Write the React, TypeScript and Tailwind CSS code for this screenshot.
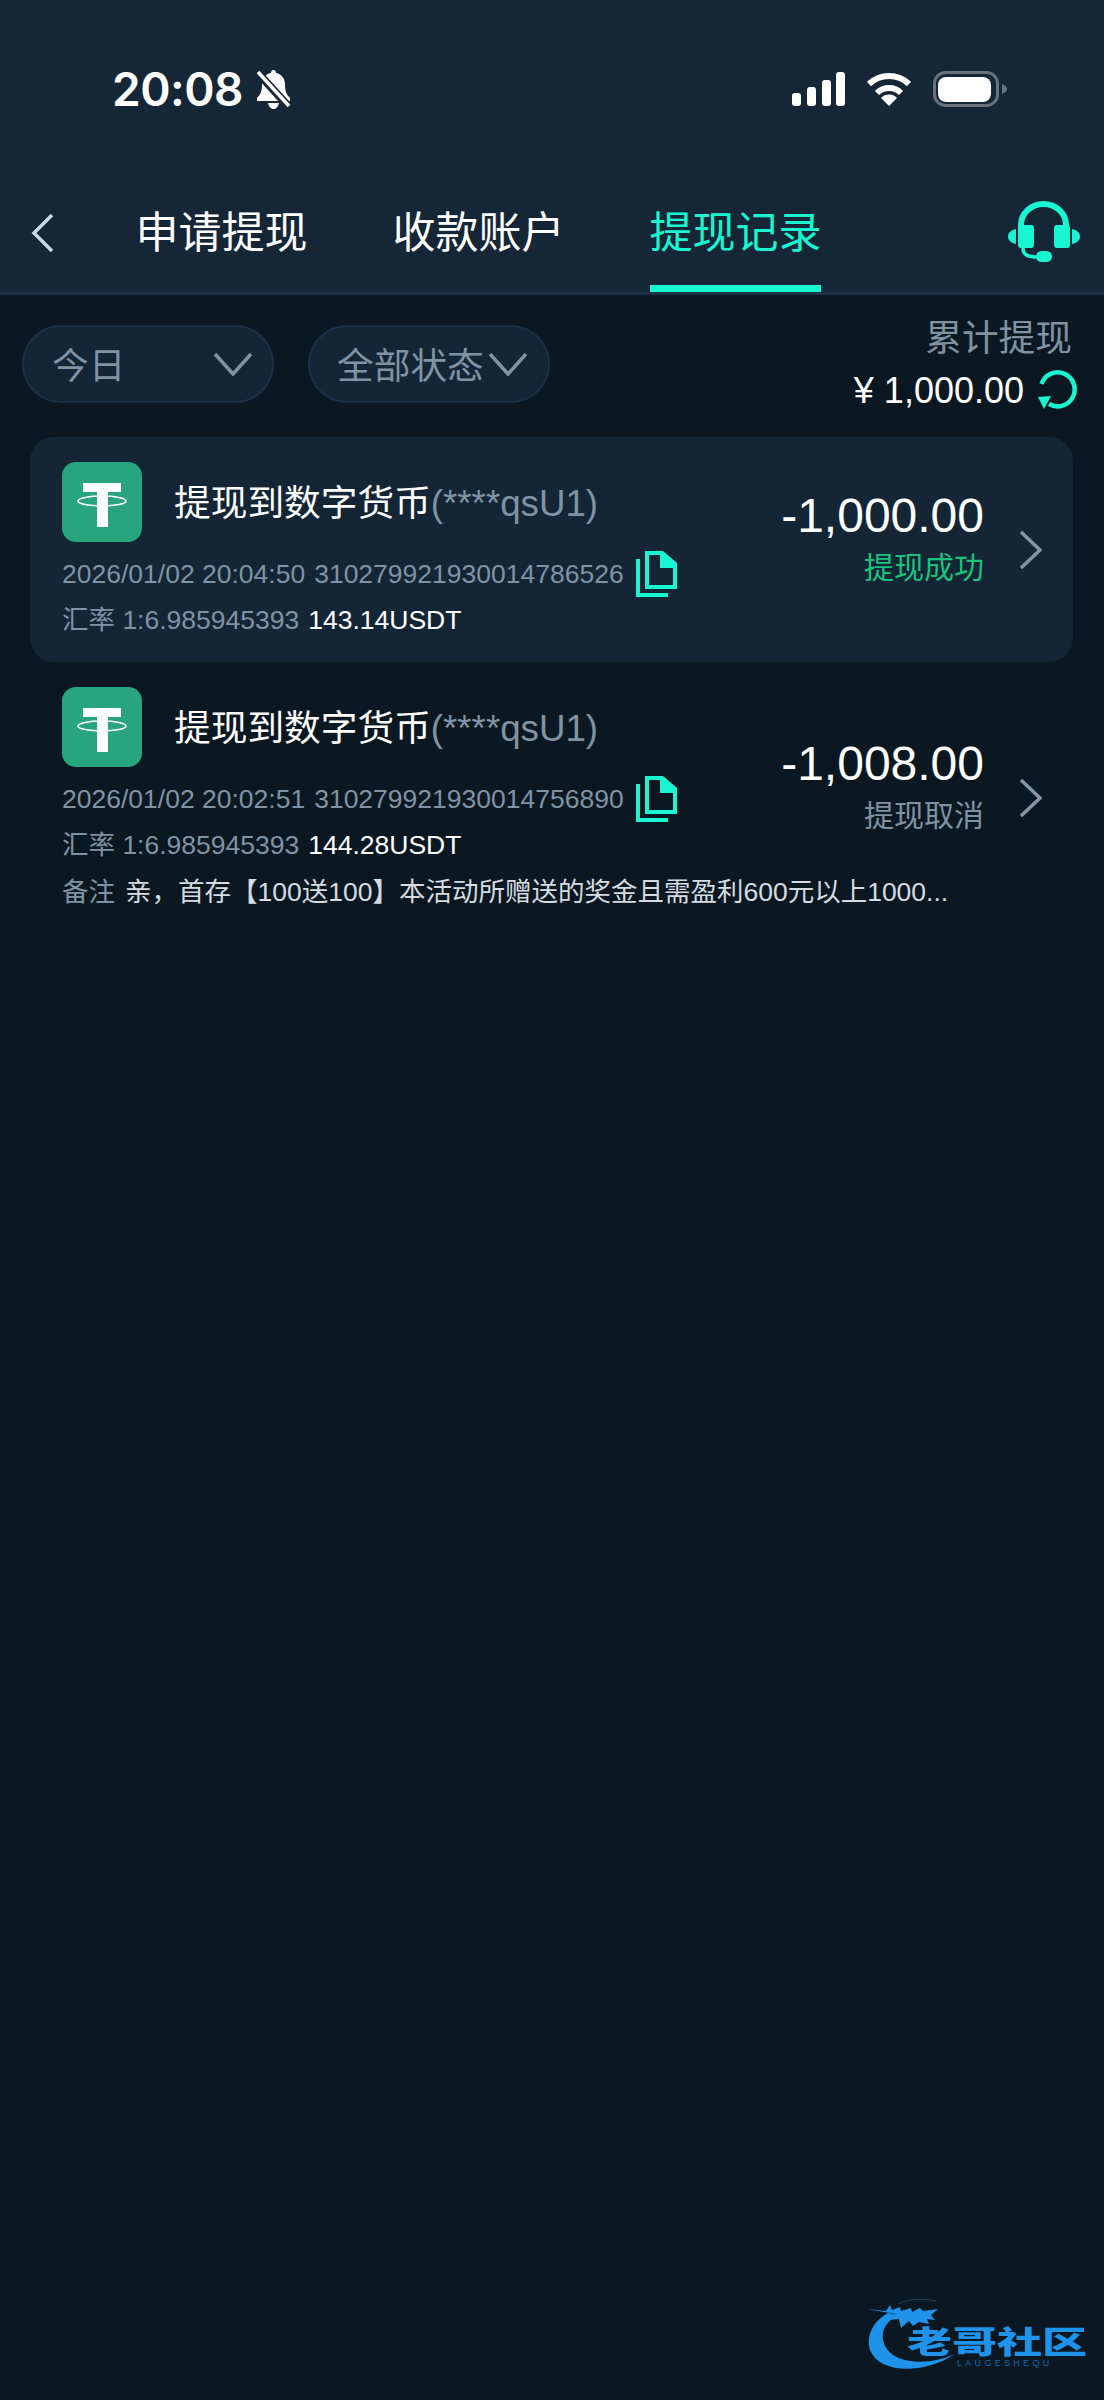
const records = [
  {
    account: "(****qsU1)",
    time: "2026/01/02 20:04:50",
    orderNo: "310279921930014786526",
    rate: "1:6.985945393",
    usdt: "143.14USDT",
    amount: "-1,000.00",
    status: "提现成功",
    statusClass: "text-[#19c37d]",
    cardClass: "bg-[#142536] pb-[24px]",
  },
  {
    account: "(****qsU1)",
    time: "2026/01/02 20:02:51",
    orderNo: "310279921930014756890",
    rate: "1:6.985945393",
    usdt: "144.28USDT",
    amount: "-1,008.00",
    status: "提现取消",
    statusClass: "text-[#7f93a3]",
    cardClass: "pb-[22px]",
    note: "亲，首存【100送100】本活动所赠送的奖金且需盈利600元以上1000...",
  },
];

const TetherIcon = () => (
  <svg viewBox="0 0 80 80" className="h-[80px] w-[80px] shrink-0">
    <rect width="80" height="80" rx="14" fill="#28a57e" />
    <path d="M21 21h38v9H46v35H35V30H21z" fill="#fff" />
    <ellipse cx="40" cy="39" rx="24" ry="5" fill="none" stroke="#fff" strokeWidth="1.6" />
  </svg>
);

const CopyIcon = () => (
  <svg viewBox="0 0 41 47" className="h-[47px] w-[41px] shrink-0" fill="#19f5d0">
    <path fillRule="evenodd" d="M9 1h18l14 12v26H9zM13 5v30h24V18H24V5z" />
    <path d="M0 9h4v34h28v4H0z" />
  </svg>
);

const Chevron = () => (
  <svg viewBox="0 0 23 38" className="h-[38px] w-[23px] shrink-0" fill="none" stroke="#8496a6" strokeWidth="3.5">
    <path d="M2 1l19 18L2 37" />
  </svg>
);

const FilterPill = ({ label, className }: { label: string; className: string }) => (
  <div
    className={`flex h-[78px] items-center justify-between rounded-[39px] border-2 border-[#1c3149] bg-[#142536] text-[36.700px] text-[#7f93a3] ${className}`}
  >
    <span className="pt-[5px]">{label}</span>
    <svg viewBox="0 0 40 24" className="h-[24px] w-[40px]" fill="none" stroke="#7f93a3" strokeWidth="3.5">
      <path d="M2 2l18 20L38 2" />
    </svg>
  </div>
);

const Tab = ({ label, active }: { label: string; active?: boolean }) => (
  <div
    className={`flex h-[92px] w-[171px] items-center justify-center whitespace-nowrap border-b-[7px] pb-[19px] text-[43px] leading-none ${
      active ? "border-[#19f5d0] text-[#19f5d0]" : "border-transparent text-white"
    }`}
  >
    {label}
  </div>
);

const StatusBar = () => (
  <div className="flex h-[40px] items-center justify-between pl-[112px] pr-[97px] text-white">
    <div className="flex items-center gap-[13px]">
      <span className="font-['Inter'] text-[46px] font-semibold leading-none tracking-[-0.5px]">20:08</span>
      <svg viewBox="0 0 35 39" className="h-[39px] w-[35px]">
        <path d="M17 0c2 0 3 1 3 3 6 1 9 6 9 12 0 7 2 10 5 13v3H1v-3c3-3 5-6 5-13 0-6 3-11 9-12 0-2 1-3 2-3z" fill="#fff" />
        <path d="M12 33h11c-1 4-3 6-5.500 6S13 37 12 33z" fill="#fff" />
        <path d="M2 3l31 34" stroke="#152637" strokeWidth="8" />
        <path d="M2 2l31 34" stroke="#fff" strokeWidth="3.500" />
      </svg>
    </div>
    <div className="flex items-center gap-[21px]">
      <svg viewBox="0 0 53 34" className="h-[34px] w-[53px]" fill="#fff">
        <rect x="0" y="21" width="9" height="13" rx="3" />
        <rect x="15" y="15" width="9" height="19" rx="3" />
        <rect x="30" y="8" width="9" height="26" rx="3" />
        <rect x="44" y="0" width="9" height="34" rx="3" />
      </svg>
      <svg viewBox="0 0 46 34" className="h-[34px] w-[46px]">
        <path d="M3 12a29 29 0 0 1 40 0" fill="none" stroke="#fff" strokeWidth="6" />
        <path d="M11 21a17 17 0 0 1 24 0" fill="none" stroke="#fff" strokeWidth="6" />
        <path d="M23 34l-8-8a11 11 0 0 1 16 0z" fill="#fff" />
      </svg>
      <svg viewBox="0 0 74 36" className="h-[36px] w-[74px]">
        <rect x="1.500" y="1.500" width="63" height="33" rx="11" fill="none" stroke="#66737f" strokeWidth="3" />
        <rect x="5" y="6" width="53" height="25" rx="8" fill="#fff" />
        <path d="M69 13c3 1 5 3 5 5s-2 4-5 5z" fill="#66737f" />
      </svg>
    </div>
  </div>
);

const Watermark = () => (
  <div className="absolute bottom-0 right-0 h-[120px] w-[264px] font-['Noto_Sans_CJK_SC'] text-[#1f93ea]">
    <svg viewBox="0 0 264 120" className="absolute inset-0 h-[120px] w-[264px] blur-[0.6px]" fill="#1f93ea">
      <path d="M48 33C31 42 25 60 31 72c9 20 50 24 84 2-29 13-62 9-70-8-6-13 0-24 13-31z" />
      <path d="M26 29l20 2 4-6 2 5 8-3 1 4 10-3 1 4 8-4 3 3 15-2-7 6 4 5-8-1 2 5-10-2-6 4-4-5-8 7-2-9-11 1 8-6z" />
      <path d="M58 24c10-5 24-6 38-3" fill="none" stroke="#2b4a66" strokeWidth="0.800" />
    </svg>
    <span className="absolute left-[67px] top-[44px] h-[31px] origin-left scale-y-[0.68] whitespace-nowrap text-[45px] font-black leading-[31px]">
      老哥社区
    </span>
    <span className="absolute left-[117px] top-[79px] whitespace-nowrap font-['Liberation_Sans'] text-[9px] leading-none tracking-[3.300px] text-[#1668ad]">
      LAUGESHEQU
    </span>
  </div>
);

export default function App() {
  return (
    <div className="relative min-h-[2400px] bg-[#0c1821] font-['Liberation_Sans','Noto_Sans_CJK_SC',sans-serif]">
      <header className="flex h-[295px] flex-col border-b-[3px] border-[#1c3149] bg-[#152637] pt-[69px]">
        <StatusBar />
        <div className="mt-[91px] flex items-center pl-[31px]">
          <svg viewBox="0 0 23 38" className="mb-[26px] h-[38px] w-[23px]" fill="none" stroke="#c6d8e8" strokeWidth="3.500">
            <path d="M21 1L3 19l18 18" />
          </svg>
          <div className="ml-[82px] flex gap-[86px]">
            <Tab label="申请提现" />
            <Tab label="收款账户" />
            <Tab label="提现记录" active />
          </div>
          <svg viewBox="0 0 72 61" className="mb-[30px] ml-[187px] h-[61px] w-[72px]" fill="#19f5d0">
            <path d="M8 28v15C3 42 0 39 0 35.500S3 29 8 28zM64 28v15c5-1 8-4 8-7.500S69 29 64 28z" />
            <rect x="10" y="24" width="16" height="23" rx="3" />
            <rect x="46" y="24" width="16" height="23" rx="3" />
            <path d="M13 28v-4a22.500 21 0 0 1 45 0v4" fill="none" stroke="#19f5d0" strokeWidth="6" />
            <path d="M15 47c0 7 5 9 15 9" fill="none" stroke="#19f5d0" strokeWidth="3.500" />
            <rect x="28" y="50" width="16" height="11" rx="5.500" />
          </svg>
        </div>
      </header>

      <main className="pt-[30px]">
        <div className="flex items-start justify-between pl-[22px] pr-[26px]">
          <div className="flex gap-[34px]">
            <FilterPill label="今日" className="w-[252px] pl-[28px] pr-[19px]" />
            <FilterPill label="全部状态" className="w-[242px] pl-[27px] pr-[20px]" />
          </div>
          <div className="-mt-[8px] flex flex-col items-end">
            <div className="mr-[6px] text-[36.700px] leading-[44px] text-[#7f93a3]">累计提现</div>
            <div className="mt-[9px] flex h-[40px] items-center gap-[13px] text-[36px] text-white">
              <span className="mr-[1px] pt-[1px]">¥ 1,000.00</span>
              <svg viewBox="0 0 40 40" className="h-[40px] w-[40px]" fill="none" stroke="#19f5d0" strokeWidth="4.500">
                <path d="M3.500 14A17 17 0 1 1 11 34" />
                <path d="M0 27l13-1-7 13z" fill="#19f5d0" stroke="none" />
              </svg>
            </div>
          </div>
        </div>

        <div className="ml-[30px] mr-[31px] mt-[27px]">
          {records.map((r) => (
            <div key={r.orderNo} className={`flex items-center rounded-[24px] pl-[32px] pr-[31px] pt-[25px] ${r.cardClass}`}>
              <div className="min-w-0 flex-1">
                <div className="flex h-[80px] items-center gap-[32px] text-[36.700px]">
                  <TetherIcon />
                  <div className="pt-[3px]">
                    <span className="text-white">提现到数字货币</span>
                    <span className="text-[#7f93a3]">{r.account}</span>
                  </div>
                </div>
                <div className="mt-[8px] flex h-[47px] items-center text-[26.500px] text-[#7f93a3]">
                  <span className="pt-[2px]">{r.time}</span>
                  <span className="ml-[9px] pt-[2px]">{r.orderNo}</span>
                  <span className="ml-[12px]">
                    <CopyIcon />
                  </span>
                </div>
                <div className="mb-[2px] mt-[9px] flex h-[30px] items-center whitespace-nowrap text-[26.500px] text-[#7f93a3]">
                  <span>汇率 {r.rate}</span>
                  <span className="ml-[9px] text-white">{r.usdt}</span>
                </div>
                {r.note && (
                  <div className="mt-[17px] flex h-[30px] items-center whitespace-nowrap text-[26.500px]">
                    <span className="text-[#7f93a3]">备注</span>
                    <span className="ml-[10px] text-[#d5dbe0]">{r.note}</span>
                  </div>
                )}
              </div>
              <div className="flex flex-col items-end pb-[29px]">
                <div className="text-[48px] leading-[56px] text-white">{r.amount}</div>
                <div className={`mt-[9px] text-[30px] leading-[30px] ${r.statusClass}`}>{r.status}</div>
              </div>
              <div className="ml-[35px]">
                <Chevron />
              </div>
            </div>
          ))}
        </div>
      </main>

      <Watermark />
    </div>
  );
}
